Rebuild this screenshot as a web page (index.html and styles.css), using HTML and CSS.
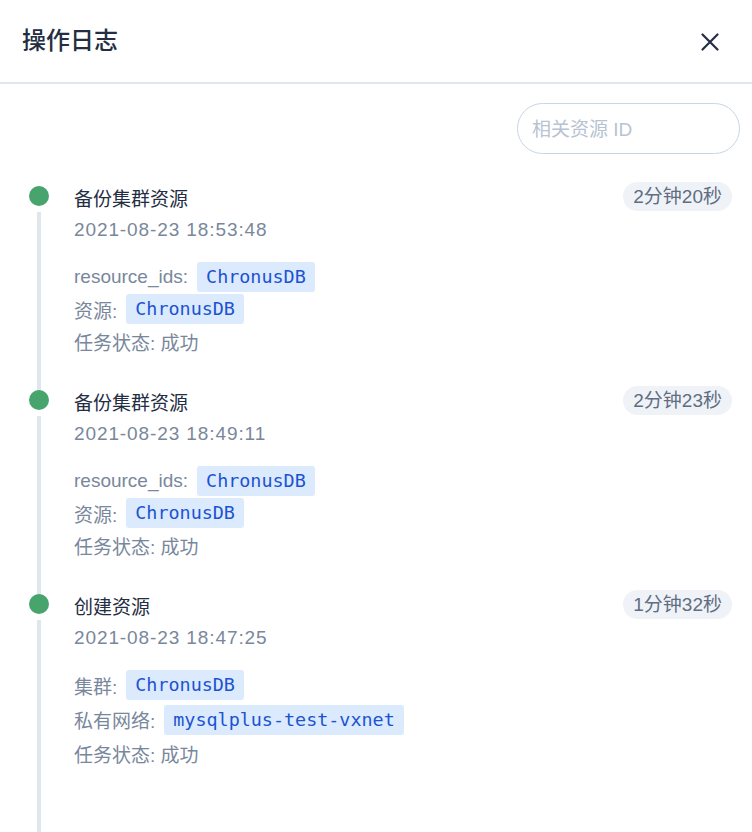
FILE: index.html
```html
<!DOCTYPE html>
<html lang="zh-CN">
<head>
<meta charset="utf-8">
<title>操作日志</title>
<link rel="stylesheet" href="styles.css">
</head>
<body>
<div class="drawer">
  <header class="header">
    <h1 class="title">操作日志</h1>
    <button class="close" aria-label="关闭">
      <svg width="18" height="18" viewBox="0 0 18 18"><path d="M1.5 1.5 L16.5 16.5 M16.5 1.5 L1.5 16.5" stroke="#242e42" stroke-width="2.2" stroke-linecap="round" fill="none"/></svg>
    </button>
  </header>
  <div class="search-bar">
    <input class="search" type="text" placeholder="相关资源 ID">
  </div>
  <ul class="timeline">
    <li class="item">
      <div class="rail"><span class="dot"></span><span class="line"></span></div>
      <div class="content">
        <div class="head"><span class="name">备份集群资源</span><span class="badge">2分钟20秒</span></div>
        <div class="date">2021-08-23 18:53:48</div>
        <div class="details">
          <div class="row"><span class="label">resource_ids:</span><span class="tag">ChronusDB</span></div>
          <div class="row"><span class="label">资源:</span><span class="tag">ChronusDB</span></div>
          <div class="row"><span class="label">任务状态: 成功</span></div>
        </div>
      </div>
    </li>
    <li class="item">
      <div class="rail"><span class="dot"></span><span class="line"></span></div>
      <div class="content">
        <div class="head"><span class="name">备份集群资源</span><span class="badge">2分钟23秒</span></div>
        <div class="date">2021-08-23 18:49:11</div>
        <div class="details">
          <div class="row"><span class="label">resource_ids:</span><span class="tag">ChronusDB</span></div>
          <div class="row"><span class="label">资源:</span><span class="tag">ChronusDB</span></div>
          <div class="row"><span class="label">任务状态: 成功</span></div>
        </div>
      </div>
    </li>
    <li class="item last">
      <div class="rail"><span class="dot"></span><span class="line"></span></div>
      <div class="content">
        <div class="head"><span class="name">创建资源</span><span class="badge">1分钟32秒</span></div>
        <div class="date">2021-08-23 18:47:25</div>
        <div class="details">
          <div class="row"><span class="label">集群:</span><span class="tag">ChronusDB</span></div>
          <div class="row row-wide"><span class="label">私有网络:</span><span class="tag">mysqlplus-test-vxnet</span></div>
          <div class="row"><span class="label">任务状态: 成功</span></div>
        </div>
      </div>
    </li>
  </ul>
</div>
</body>
</html>
```

FILE: styles.css
```css
* { box-sizing: border-box; }
html, body {
  margin: 0;
  padding: 0;
  background: #ffffff;
}
body {
  width: 752px;
  height: 832px;
  overflow: hidden;
  font-family: "Liberation Sans", "Noto Sans CJK SC", sans-serif;
  font-size: 19px;
  color: #242e42;
}
.drawer {
  display: flex;
  flex-direction: column;
}
.header {
  height: 84px;
  display: flex;
  align-items: center;
  justify-content: space-between;
  padding: 0 32px 0 22px;
  border-bottom: 2px solid #dfe6ee;
}
.title {
  margin: 0;
  font-size: 24px;
  font-weight: 500;
  color: #242e42;
  line-height: 32px;
}
.close {
  border: 0;
  background: none;
  padding: 0;
  width: 20px;
  height: 20px;
  display: flex;
  align-items: center;
  justify-content: center;
  margin-top: 2px;
}
.search-bar {
  display: flex;
  justify-content: flex-end;
  padding: 19px 12px 0 20px;
}
.search {
  width: 223px;
  height: 51px;
  border: 1.5px solid #c9d5e3;
  border-radius: 26px;
  padding: 3px 14px 0;
  font-family: "Liberation Sans", "Noto Sans CJK SC", sans-serif;
  font-size: 19px;
  color: #242e42;
  outline: none;
  background: #fff;
}
.search::placeholder {
  color: #b7c3d3;
}
.timeline {
  list-style: none;
  margin: 31px 0 0;
  padding: 0 20px;
}
.item {
  display: flex;
  padding-bottom: 32px;
}
.item.last {
  padding-bottom: 67px;
}
.rail {
  width: 54px;
  flex: none;
  display: flex;
  flex-direction: column;
  align-items: flex-start;
  padding-left: 9px;
  padding-top: 1px;
  margin-bottom: -35px;
}
.item.last .rail {
  margin-bottom: -67px;
}
.dot {
  width: 20px;
  height: 20px;
  border-radius: 50%;
  background: #48a46d;
  flex: none;
}
.line {
  width: 4px;
  flex: 1;
  margin: 6px 0 0 8px;
  background: #dfe6ee;
}
.content {
  flex: 1;
  min-width: 0;
}
.head {
  display: flex;
  justify-content: space-between;
  align-items: flex-start;
}
.name {
  line-height: 30px;
  color: #242e42;
}
.badge {
  margin-top: -3px;
  height: 29px;
  line-height: 29px;
  padding: 0 10px;
  border-radius: 15px;
  background: #eff3f7;
  color: #5f6d82;
}
.date {
  line-height: 30px;
  color: #79879c;
  letter-spacing: 0.9px;
}
.details {
  margin-top: 16px;
}
.row {
  display: flex;
  align-items: center;
  height: 32px;
  color: #79879c;
}
.row-wide {
  height: 35px;
  margin-top: 1px;
}
.label {
  white-space: pre;
}
.tag {
  margin-left: 9px;
  height: 30px;
  line-height: 30px;
  padding: 0 9px;
  border-radius: 3px;
  background: #dbeafd;
  color: #1b53d2;
  font-family: "DejaVu Sans Mono", "Liberation Mono", monospace;
  font-size: 18.4px;
}
```
